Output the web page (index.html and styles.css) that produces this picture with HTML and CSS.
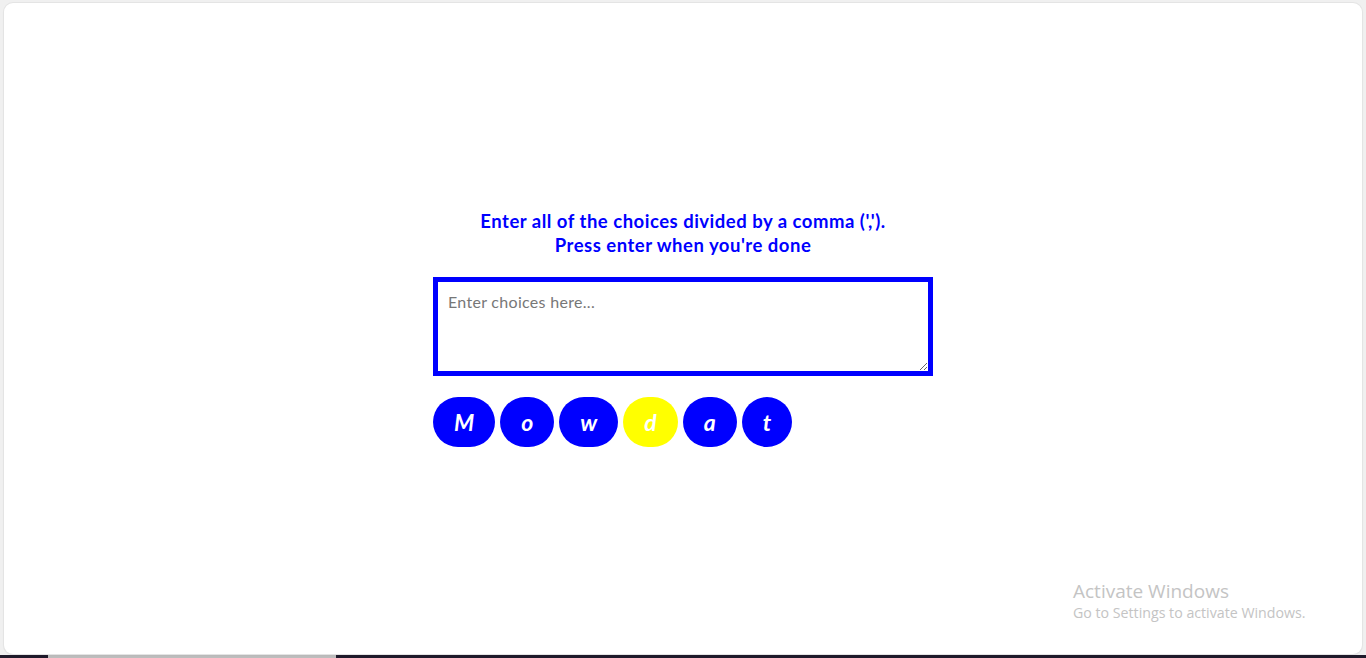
FILE: index.html
```html
<!DOCTYPE html>
<html lang="en">
<head>
<meta charset="utf-8">
<title>Choices</title>
<link rel="stylesheet" href="styles.css">
</head>
<body>
<div class="screen">
  <main class="panel">
    <div class="content">
      <h1 class="prompt">Enter all of the choices divided by a comma (',').<br>Press enter when you're done</h1>
      <textarea class="choices" placeholder="Enter choices here..."></textarea>
      <div class="letters">
        <span class="letter">M</span>
        <span class="letter">o</span>
        <span class="letter">w</span>
        <span class="letter active">d</span>
        <span class="letter">a</span>
        <span class="letter">t</span>
      </div>
    </div>
    <div class="watermark">
      <div class="wm-title">Activate Windows</div>
      <div class="wm-sub">Go to Settings to activate Windows.</div>
    </div>
  </main>
  <div class="taskbar">
    <span class="tb-dark tb-a"></span>
    <span class="tb-gray"></span>
    <span class="tb-dark tb-b"></span>
  </div>
</div>
</body>
</html>
```

FILE: styles.css
```css
* { box-sizing: border-box; }
html, body {
  margin: 0;
  padding: 0;
  height: 100%;
}
body {
  background: #f0f0f0;
  font-family: Lato, "Open Sans", sans-serif;
  overflow: hidden;
}
.screen {
  height: 658px;
  display: flex;
  flex-direction: column;
  padding: 3px 4px 0 4px;
}
.panel {
  position: relative;
  flex: 0 0 651px;
  background: #ffffff;
  border-radius: 9px;
  box-shadow: 0 0 0 1px #e4e4e4, 0 1px 2px rgba(0,0,0,0.08);
  display: flex;
  align-items: center;
  justify-content: center;
}
.content {
  width: 500px;
  display: flex;
  flex-direction: column;
  align-items: stretch;
  margin-top: -1px;
}
.prompt {
  margin: 0 0 20px 0;
  text-align: center;
  color: #0000ff;
  font-size: 18.5px;
  letter-spacing: 0.5px;
  line-height: 24px;
  font-weight: 700;
  white-space: nowrap;
}
.choices {
  display: block;
  width: 500px;
  height: 99px;
  border: 5px solid #0000ff;
  padding: 10px 10px;
  font-family: Lato, "Open Sans", sans-serif;
  font-size: 16px;
  letter-spacing: 0.3px;
  color: #333;
  resize: vertical;
  outline: none;
  margin: 0;
}
.choices::placeholder {
  color: #777777;
}
.letters {
  display: flex;
  gap: 5px;
  margin-top: 21px;
}
.letter {
  height: 50px;
  min-width: 48px;
  padding: 0 21px;
  border-radius: 25px;
  background: #0000ff;
  color: #ffffff;
  font-style: italic;
  font-weight: 700;
  font-size: 23px;
  display: flex;
  align-items: center;
  justify-content: center;
}
.letter.active {
  background: #ffff00;
}
.watermark {
  position: absolute;
  left: 1069px;
  top: 576px;
  color: #c4c4c4;
  font-family: "Open Sans", "Noto Sans", sans-serif;
}
.wm-title {
  font-size: 19px;
  line-height: 24px;
}
.wm-sub {
  font-size: 14.2px;
  line-height: 20px;
}
.taskbar {
  margin: 1px -4px 0 -4px;
  height: 3px;
  display: flex;
}
.tb-dark { background: #1f1b2b; }
.tb-a { width: 48px; }
.tb-gray { width: 288px; background: #bdbdbd; }
.tb-b { flex: 1; }
```
